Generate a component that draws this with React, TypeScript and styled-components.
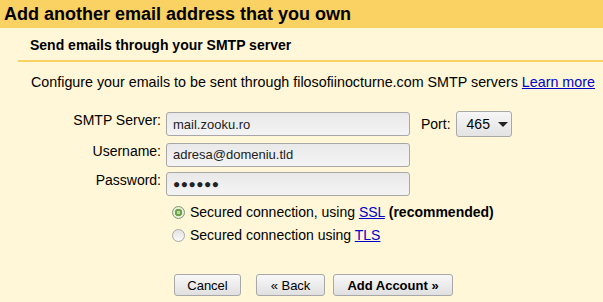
import React from "react"
import styled, { createGlobalStyle } from "styled-components"

const GlobalStyle = createGlobalStyle`
  html, body {
    margin: 0;
    padding: 0;
    background: #fff7d7;
    font-family: "Liberation Sans", Arial, sans-serif;
    color: #000;
  }
`

const Page = styled.div`
  width: 603px;
  height: 302px;
  overflow: hidden;
  background: #fff7d7;
`

const TitleBar = styled.div`
  height: 28px;
  background: #fad163;
  display: flex;
  align-items: center;
  padding-left: 4px;
  font-size: 18px;
  font-weight: bold;
`

const Content = styled.div`
  padding-left: 18px;
`

const SubTitle = styled.div`
  height: 34px;
  display: flex;
  align-items: center;
  padding-left: 12px;
  padding-top: 1px;
  box-sizing: border-box;
  font-size: 14px;
  font-weight: bold;
  border-bottom: 2px solid #fad163;
`

const Intro = styled.p`
  margin: 11px 0 0 13px;
  font-size: 14.3px;
  line-height: 18px;
  white-space: nowrap;
`

const Link = styled.a`
  color: #0000cc;
  text-decoration: underline;
  cursor: pointer;
`

const Form = styled.div`
  display: grid;
  grid-template-columns: 143px 244px auto;
  column-gap: 5px;
  row-gap: 5.5px;
  margin-top: 21px;
`

const Label = styled.label`
  text-align: right;
  font-size: 14px;
  line-height: 17px;
`

const Input = styled.div<{ $dots?: boolean }>`
  box-sizing: border-box;
  height: 24px;
  border: 1px solid #a8a8a8;
  border-radius: 3px;
  background: linear-gradient(#e9e9e9, #f4f4f4);
  padding-left: 6px;
  display: flex;
  align-items: center;
  font-size: ${(p) => (p.$dots ? "12px" : "13px")};
  letter-spacing: ${(p) => (p.$dots ? "0.5px" : "0")};
  color: #222;
`

const PortCell = styled.div`
  display: flex;
  align-items: center;
  gap: 5px;
  font-size: 14px;
  margin-left: 6px;
  margin-top: -1px;
`

const Select = styled.div`
  box-sizing: border-box;
  height: 26px;
  width: 56px;
  border: 1px solid #a8a8a8;
  border-radius: 3px;
  background: linear-gradient(#f6f6f6, #e3e3e3);
  display: flex;
  align-items: center;
  padding-left: 10px;
  gap: 8px;
  font-size: 14px;
`

const Arrow = styled.span`
  width: 0;
  height: 0;
  border-left: 5px solid transparent;
  border-right: 5px solid transparent;
  border-top: 5px solid #222;
`

const Options = styled.div`
  margin: 8px 0 0 154px;
  display: flex;
  flex-direction: column;
  gap: 7px;
`

const RadioRow = styled.div`
  display: flex;
  align-items: center;
  gap: 5px;
  font-size: 14px;
  line-height: 16px;
`

const Radio = styled.span<{ $on?: boolean }>`
  box-sizing: border-box;
  width: 13px;
  height: 13px;
  border-radius: 50%;
  border: 1px solid ${(p) => (p.$on ? "#7f9a6a" : "#a8a8a8")};
  background: ${(p) =>
    p.$on
      ? "radial-gradient(circle, #b7dca0 0 1.5px, #6fa14a 2px 3.5px, #e6eedd 4px 100%)"
      : "linear-gradient(#e2e2e2, #fbfbfb)"};
`

const Buttons = styled.div`
  display: flex;
  gap: 8px;
  margin: 31px 0 0 156px;
`

const Button = styled.button<{ $primary?: boolean; $width: number; $space?: number }>`
  box-sizing: border-box;
  height: 22px;
  width: ${(p) => p.$width}px;
  margin-right: ${(p) => p.$space ?? 0}px;
  padding: 0;
  border: 1px solid #a8a8a8;
  border-radius: 3px;
  background: linear-gradient(#f8f8f8, #e0e0e0);
  font-family: "Liberation Sans", Arial, sans-serif;
  font-size: 13px;
  font-weight: ${(p) => (p.$primary ? "bold" : "normal")};
  color: #000;
`

export default function App() {
  return (
    <Page>
      <GlobalStyle />
      <TitleBar>Add another email address that you own</TitleBar>
      <Content>
        <SubTitle>Send emails through your SMTP server</SubTitle>
        <Intro>
          Configure your emails to be sent through filosofiinocturne.com SMTP
          servers <Link>Learn more</Link>
        </Intro>
        <Form>
          <Label>SMTP Server:</Label>
          <Input>mail.zooku.ro</Input>
          <PortCell>
            Port:
            <Select>
              465
              <Arrow />
            </Select>
          </PortCell>
          <Label>Username:</Label>
          <Input>adresa@domeniu.tld</Input>
          <span />
          <Label>Password:</Label>
          <Input $dots>●●●●●●</Input>
          <span />
        </Form>
        <Options>
          <RadioRow>
            <Radio $on />
            <span>
              Secured connection, using <Link>SSL</Link>{" "}
              <b>(recommended)</b>
            </span>
          </RadioRow>
          <RadioRow>
            <Radio />
            <span>
              Secured connection using <Link>TLS</Link>
            </span>
          </RadioRow>
        </Options>
        <Buttons>
          <Button $width={67} $space={7}>Cancel</Button>
          <Button $width={69}>« Back</Button>
          <Button $width={120} $primary>Add Account »</Button>
        </Buttons>
      </Content>
    </Page>
  )
}
